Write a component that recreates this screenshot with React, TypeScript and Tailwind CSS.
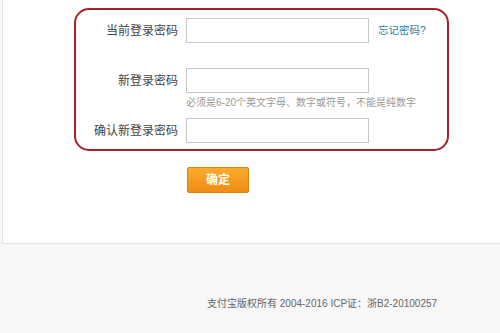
const font = { fontFamily: '"Liberation Sans", "Noto Sans CJK SC", sans-serif' };

const Row = ({ label, extra, hint }: { label: string; extra?: React.ReactNode; hint?: string }) => (
  <div className="flex h-[50px] items-start">
    <div className="flex h-[25px] w-[102px] items-center justify-end text-[12px] text-[#444]">{label}</div>
    <div className="ml-[8px] flex flex-col">
      <input type="password" className="h-[25px] w-[183px] border border-[#c8c8c8] bg-white outline-none" />
      {hint && <div className="mt-[3px] whitespace-nowrap text-[10px] leading-[14px] text-[#999]">{hint}</div>}
    </div>
    {extra}
  </div>
);

export default function App() {
  return (
    <div className="flex h-[333px] w-[500px] flex-col bg-[#f7f7f7]" style={font}>
      <div className="ml-[2px] h-[244px] border-b border-l border-[#e4e4e4] bg-white pt-[8px]">
        <div className="ml-[71px] h-[143px] w-[375px] rounded-[15px] border-2 border-[#a5222b] pt-[8px]">
          <Row
            label="当前登录密码"
            extra={<a className="ml-[9px] flex h-[25px] items-center text-[10.5px] text-[#26809e]">忘记密码?</a>}
          />
          <Row label="新登录密码" hint="必须是6-20个英文字母、数字或符号，不能是纯数字" />
          <Row label="确认新登录密码" />
        </div>
        <button className="ml-[184px] mt-[16px] flex h-[26px] w-[62px] items-center justify-center rounded-[2px] border border-[#d9860f] bg-gradient-to-b from-[#fbab2c] to-[#ef8d12] text-[12px] font-bold text-white">
          确定
        </button>
      </div>
      <div className="pl-[207px] pt-[52px] text-[10px] text-[#666]">支付宝版权所有 2004-2016 ICP证：浙B2-20100257</div>
    </div>
  );
}
